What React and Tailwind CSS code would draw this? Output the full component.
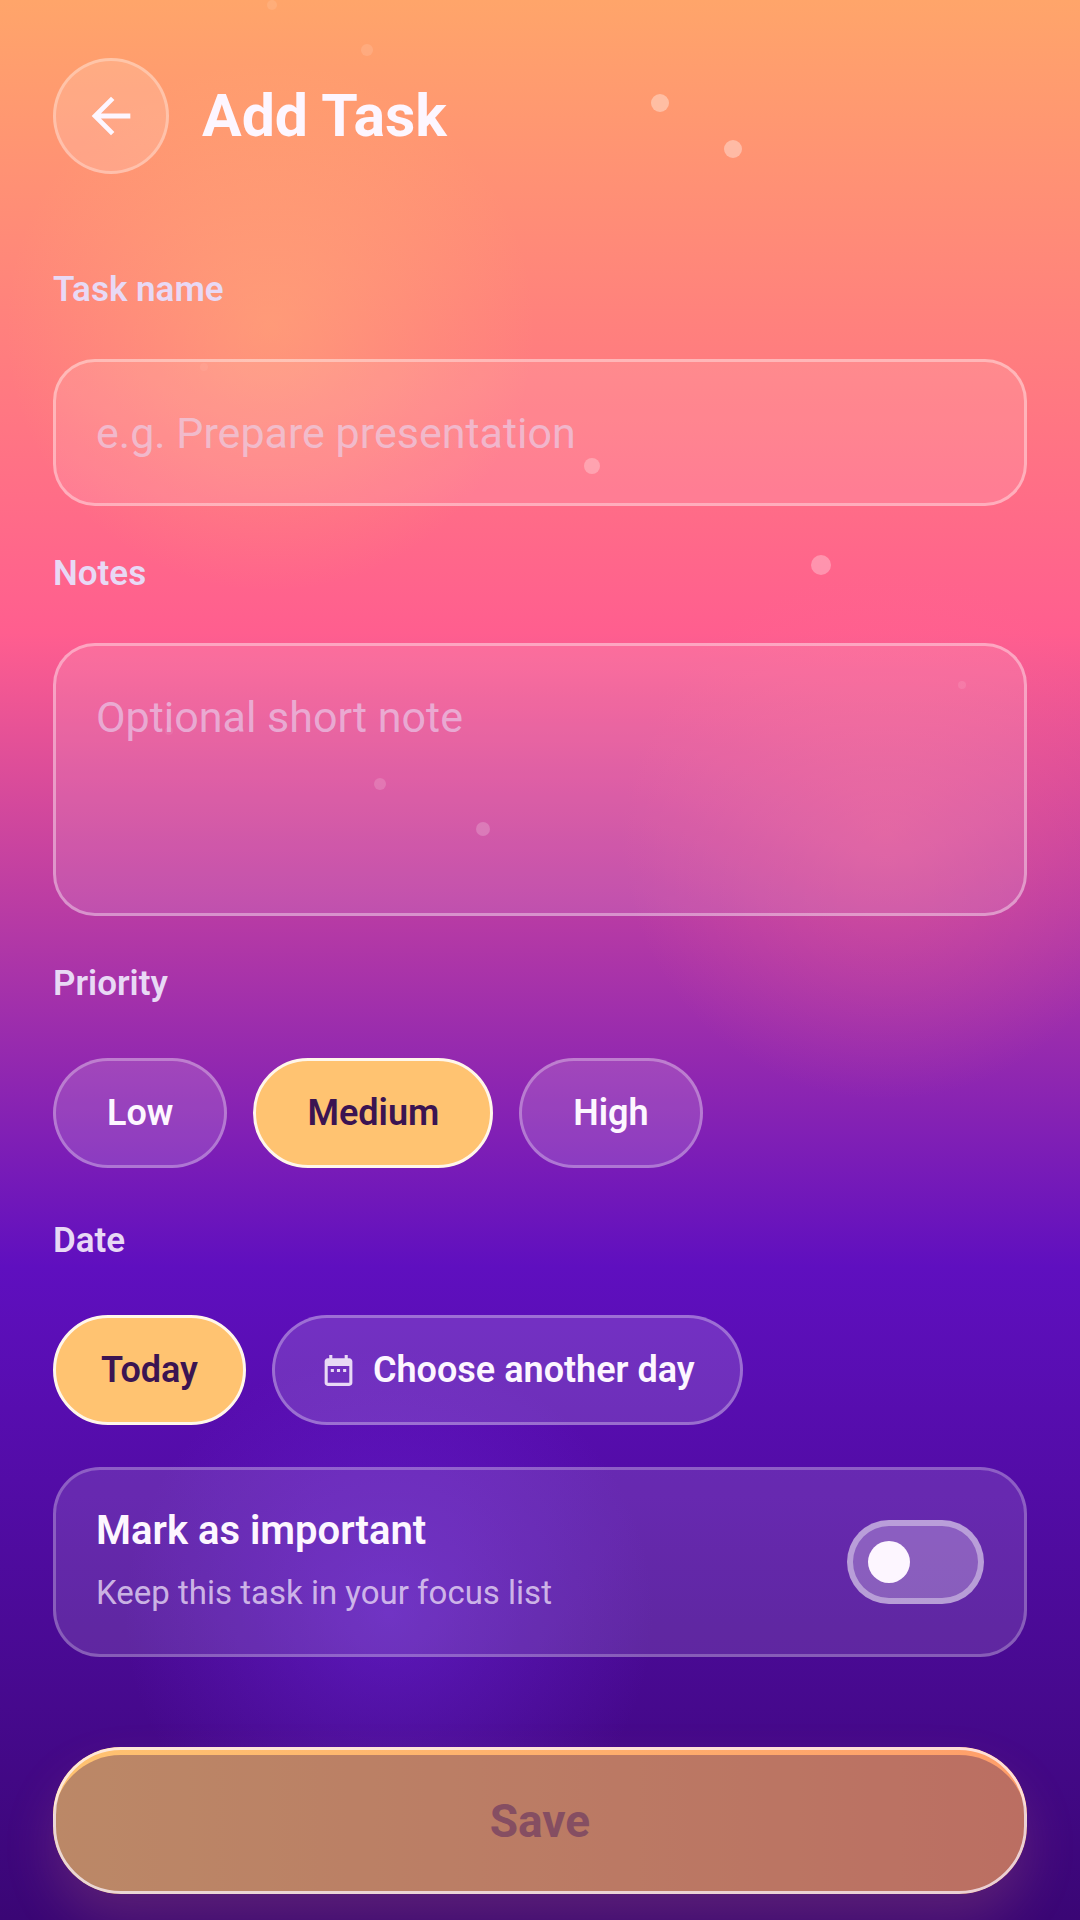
import { useState } from 'react';

const dots = [
  { x: 272, y: 5, r: 5, o: 0.1 },
  { x: 367, y: 50, r: 6, o: 0.12 },
  { x: 660, y: 103, r: 9, o: 0.36 },
  { x: 733, y: 149, r: 9, o: 0.36 },
  { x: 204, y: 367, r: 4, o: 0.06 },
  { x: 592, y: 466, r: 8, o: 0.28 },
  { x: 821, y: 565, r: 10, o: 0.3 },
  { x: 962, y: 685, r: 4, o: 0.1 },
  { x: 169, y: 731, r: 4, o: 0.07 },
  { x: 380, y: 784, r: 6, o: 0.16 },
  { x: 483, y: 829, r: 7, o: 0.2 },
];

function Backdrop() {
  return (
    <div aria-hidden="true" className="absolute inset-0 overflow-hidden bg-[linear-gradient(180deg,#ffa56a_0%,#ff5e8f_33%,#5f0fbf_66%,#3a0675_100%)]">
      <div className="absolute inset-0 bg-[radial-gradient(circle_265px_at_25%_17%,rgba(255,195,113,0.38),rgba(255,195,113,0)),radial-gradient(circle_265px_at_82%_43.5%,rgba(255,111,145,0.38),rgba(255,111,145,0)),radial-gradient(circle_265px_at_36%_84%,rgba(123,47,247,0.38),rgba(123,47,247,0))]" />
      <svg className="absolute top-0 left-0 h-full w-full" fill="#fff">
        {dots.map((d) => (
          <circle key={d.x} cx={d.x} cy={d.y} r={d.r} fillOpacity={d.o} />
        ))}
      </svg>
    </div>
  );
}

function Chip({ selected, wide, onClick, children }) {
  return (
    <button
      type="button"
      aria-pressed={selected}
      onClick={onClick}
      className={
        (selected
          ? 'border-[#fff6ea] bg-[#ffc371] text-[#3b1452] '
          : 'border-white/30 bg-white/14 text-[#fdf6ff] ') +
        (wide ? 'px-[51px] ' : 'px-[45px] ') +
        'flex h-[110px] items-center gap-4 rounded-full border-3 text-[36px] leading-[48px] font-semibold'
      }
    >
      {children}
    </button>
  );
}

const labelClass = 'block text-[35px] leading-[44px] font-semibold text-[#e8d9f5]';
const fieldClass =
  'block w-full resize-none rounded-[42px] border-3 border-white/38 bg-white/11 px-[40px] text-[43px] leading-[62px] text-[#fdf6ff] outline-none placeholder:text-[#e8d9f5]/60';

export default function App() {
  const [priority, setPriority] = useState('Medium');
  const [day, setDay] = useState('today');

  return (
    <div className="relative isolate flex min-h-screen flex-col overflow-hidden font-[Roboto,sans-serif]">
      <Backdrop />
      <form className="relative flex grow flex-col px-[53px] pt-[58px] pb-[26px]" onSubmit={(e) => e.preventDefault()}>
        <header className="flex items-center gap-[33px]">
          <button type="button" aria-label="Back" className="flex size-[116px] items-center justify-center rounded-full border-3 border-white/30 bg-white/15 text-[#fdf6ff]">
            <svg viewBox="0 0 24 24" className="size-[58px]" fill="currentColor" aria-hidden="true">
              <path d="M20 11H7.83l5.59-5.59L12 4l-8 8 8 8 1.41-1.41L7.83 13H20v-2z" />
            </svg>
          </button>
          <h1 className="text-[59px] leading-[72px] font-bold text-[#fdf6ff]">Add Task</h1>
        </header>

        <label htmlFor="task-name" className={labelClass + ' mt-[94px] mb-[47px]'}>Task name</label>
        <input id="task-name" type="text" placeholder="e.g. Prepare presentation" className={fieldClass + ' h-[147px]'} />

        <label htmlFor="notes" className={labelClass + ' mt-[46px] mb-[47px]'}>Notes</label>
        <textarea id="notes" placeholder="Optional short note" className={fieldClass + ' h-[273px] py-[40px]'} />

        <div role="group" aria-labelledby="priority-label">
          <span id="priority-label" className={labelClass + ' mt-[46px] mb-[52px]'}>Priority</span>
          <div className="flex flex-wrap gap-[26px]">
            {['Low', 'Medium', 'High'].map((name) => (
              <Chip key={name} wide selected={priority === name} onClick={() => setPriority(name)}>{name}</Chip>
            ))}
          </div>
        </div>

        <div role="group" aria-labelledby="date-label">
          <span id="date-label" className={labelClass + ' mt-[51px] mb-[52px]'}>Date</span>
          <div className="flex flex-wrap gap-[26px]">
            <Chip selected={day === 'today'} onClick={() => setDay('today')}>Today</Chip>
            <Chip selected={day === 'other'} onClick={() => setDay('other')}>
              <svg viewBox="0 0 24 24" className="size-[37px] text-[#e8d9f5]" fill="currentColor" aria-hidden="true">
                <path d="M9 11H7v2h2v-2zm4 0h-2v2h2v-2zm4 0h-2v2h2v-2zm2-7h-1V2h-2v2H8V2H6v2H5c-1.11 0-1.99.9-1.99 2L3 20c0 1.1.89 2 2 2h14c1.1 0 2-.9 2-2V6c0-1.1-.9-2-2-2zm0 16H5V9h14v11z" />
              </svg>
              Choose another day
            </Chip>
          </div>
        </div>

        <div className="mt-[42px] flex min-h-[190px] items-center justify-between rounded-[47px] border-3 border-white/25 bg-white/12 px-[40px]">
          <label htmlFor="important" className="flex flex-col gap-3 pb-0.5">
            <span className="text-[40px] leading-[52px] font-semibold text-[#fdf6ff]">Mark as important</span>
            <span className="text-[33px] leading-[48px] text-[#e8d9f5]/80">Keep this task in your focus list</span>
          </label>
          <input
            id="important"
            type="checkbox"
            role="switch"
            className="flex h-[84px] w-[137px] appearance-none items-center rounded-full border-6 border-white/40 bg-white/25 px-[15px] before:size-[42px] before:rounded-full before:bg-[#fdf6ff] checked:justify-end"
          />
        </div>

        <div className="mt-auto pt-[90px]">
          <button type="submit" className="relative flex h-[147px] w-full items-center justify-center overflow-hidden rounded-[68px] bg-linear-to-r from-[#ffc371] to-[#ff9e6a] text-[46px] leading-[60px] font-bold text-[#854e62] shadow-[0_26px_52px_rgba(255,160,107,0.16)]">
            <span className="absolute inset-x-0 top-2 bottom-0 rounded-[68px] bg-[#1d0050]/30" />
            <span className="absolute inset-0 rounded-[68px] border-3 border-[#fdf6ff]/72" />
            <span className="relative">Save</span>
          </button>
        </div>
      </form>
    </div>
  );
}
